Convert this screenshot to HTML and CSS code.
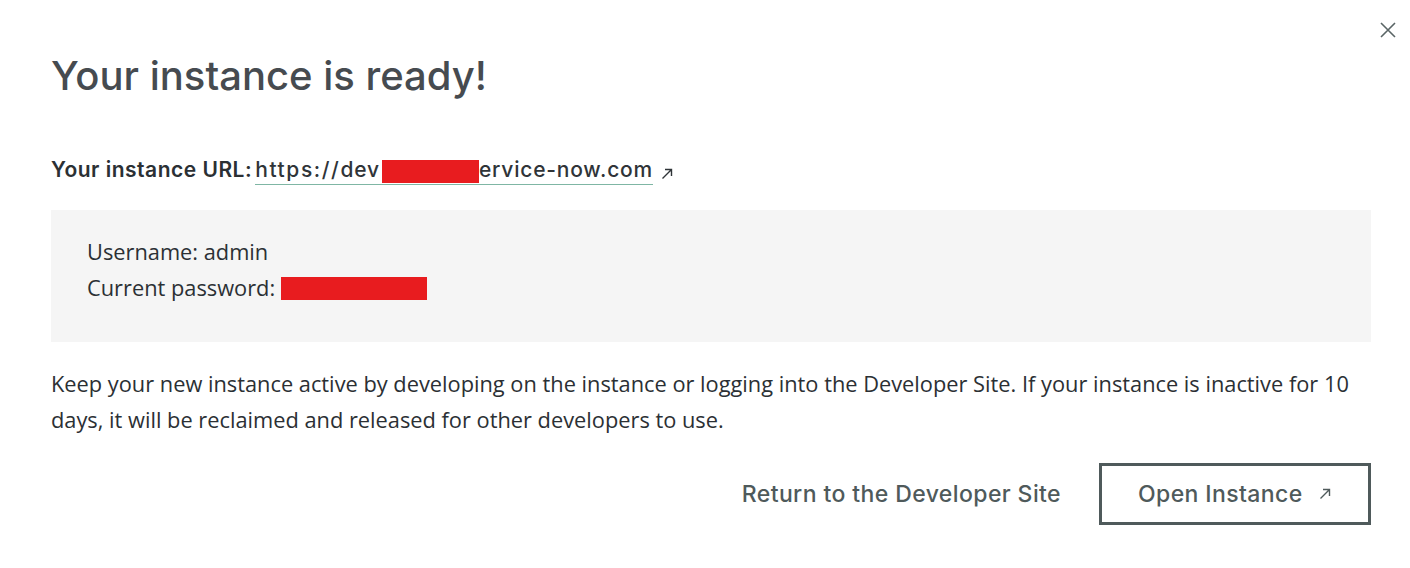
FILE: index.html
```html
<!DOCTYPE html>
<html lang="en">
<head>
<meta charset="utf-8">
<title>Your instance is ready!</title>
<link rel="stylesheet" href="styles.css">
</head>
<body>
<div class="dialog">
  <button class="close" aria-label="Close">
    <svg width="16" height="16" viewBox="0 0 16 16"><path d="M1 1L15 15M15 1L1 15" stroke="#5a6566" stroke-width="1.6" fill="none"/></svg>
  </button>
  <h1 class="title">Your instance is ready!</h1>
  <div class="url-row">
    <span class="url-label">Your instance URL:</span>
    <a class="url-link" href="#"><span class="scheme">https://</span>dev<span class="redact redact-url"></span>ervice-now.com</a>
    <svg class="ext" width="12" height="12" viewBox="0 0 12 12"><path d="M1.5 10.5L10.5 1.5M4 1.5H10.5V8" stroke="#2f3438" stroke-width="1.4" fill="none"/></svg>
  </div>
  <div class="creds">
    <div class="cred-line">Username: admin</div>
    <div class="cred-line">Current password: <span class="redact redact-pw"></span></div>
  </div>
  <p class="note">Keep your new instance active by developing on the instance or logging into the Developer Site. If your instance is inactive for 10 days, it will be reclaimed and released for other developers to use.</p>
  <div class="actions">
    <a class="btn-link" href="#">Return to the Developer Site</a>
    <a class="btn-outline" href="#">Open Instance
      <svg class="ext-btn" width="12" height="12" viewBox="0 0 12 12"><path d="M1.5 10.5L10.5 1.5M4 1.5H10.5V8" stroke="#4f5a5b" stroke-width="1.4" fill="none"/></svg>
    </a>
  </div>
</div>
</body>
</html>
```
FILE: styles.css
```css
html, body {
  margin: 0;
  padding: 0;
  background: #ffffff;
}
.dialog {
  position: relative;
  padding: 50px 39px 0 51px;
  font-family: "Open Sans", "Liberation Sans", sans-serif;
}
.close {
  position: absolute;
  top: 22px;
  right: 14px;
  border: 0;
  background: none;
  padding: 0;
  width: 16px;
  height: 16px;
  cursor: pointer;
}
.close svg { display: block; }
.title {
  margin: 0;
  font-family: Inter, "Liberation Sans", sans-serif;
  font-weight: 500;
  font-size: 40px;
  line-height: 52px;
  color: #464b50;
}
.url-row {
  display: flex;
  align-items: baseline;
  margin-top: 54px;
  font-family: Inter, "Liberation Sans", sans-serif;
  font-size: 21px;
  line-height: 28px;
  letter-spacing: 0.7px;
}
.url-label {
  font-weight: 600;
  color: #2b3034;
  margin-right: 3px;
  letter-spacing: 0.5px;
}
.url-link {
  color: #2f3438;
  text-decoration: none;
  font-weight: 500;
  letter-spacing: 0.8px;
  border-bottom: 1.5px solid #7fb6a4;
}
.scheme {
  letter-spacing: 1.6px;
}
.redact {
  display: inline-block;
  background: #e81c1f;
  vertical-align: middle;
}
.redact-url {
  width: 97px;
  height: 23px;
  margin-left: 2px;
}
.ext {
  margin-left: 8px;
  align-self: center;
  position: relative;
  top: 3px;
}
.creds {
  margin-top: 25px;
  background: #f5f5f5;
  padding: 24px 36px 36px;
  color: #2b3034;
  font-size: 21.8px;
  line-height: 36px;
}
.redact-pw {
  width: 146px;
  height: 23px;
  position: relative;
  top: -2px;
}
.note {
  margin: 24px 0 0;
  color: #2b3034;
  font-size: 21.8px;
  line-height: 36px;
}
.actions {
  display: flex;
  justify-content: flex-end;
  align-items: center;
  gap: 38px;
  margin-top: 25px;
  font-family: Inter, "Liberation Sans", sans-serif;
  font-size: 23px;
  font-weight: 500;
  letter-spacing: 0.4px;
}
.btn-link {
  color: #4f5a5b;
  text-decoration: none;
}
.btn-outline {
  display: flex;
  align-items: center;
  gap: 16px;
  box-sizing: border-box;
  height: 62px;
  width: 272px;
  padding: 0 0 0 36px;
  border: 3px solid #4f5a5b;
  color: #4f5a5b;
  text-decoration: none;
}
```
